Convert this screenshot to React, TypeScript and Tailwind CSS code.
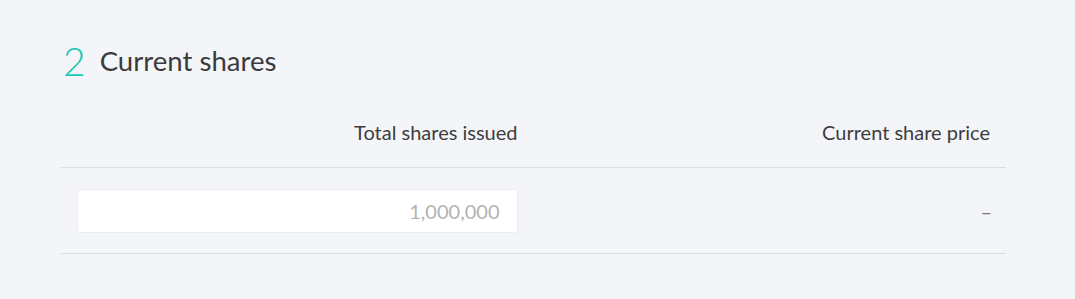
export default function App() {
  return (
    <div
      className="min-h-[299px] w-full bg-[#f4f5f9] pt-[38px] pl-[61px] pr-[69px]"
      style={{ fontFamily: "Lato, 'Open Sans', sans-serif" }}
    >
      <div className="flex items-center gap-[14px] pl-[2px]">
        <span className="text-[39px] font-light leading-[46px] text-[#19c7b2]">2</span>
        <h2 className="text-[27.6px] leading-[46px] text-[#3b3b3b]">Current shares</h2>
      </div>

      <div className="mt-[36px] grid grid-cols-2 border-b border-[#dcdde1] pb-[23px]">
        <div className="px-4 text-right text-[20px] leading-[24px] text-[#3d3d3d]">Total shares issued</div>
        <div className="px-4 text-right text-[20px] leading-[24px] text-[#3d3d3d]">Current share price</div>
      </div>

      <div className="grid grid-cols-2 items-center border-b border-[#dcdde1] pt-[21px] pb-[20px]">
        <div className="px-4">
          <div className="flex h-[44px] items-center justify-end rounded-[3px] border border-[#ebecef] bg-white px-[17px] text-[20px] text-[#b3b3b3]">
            1,000,000
          </div>
        </div>
        <div className="pl-4 pr-[14px] text-right text-[20px] text-[#777]">–</div>
      </div>
    </div>
  );
}
